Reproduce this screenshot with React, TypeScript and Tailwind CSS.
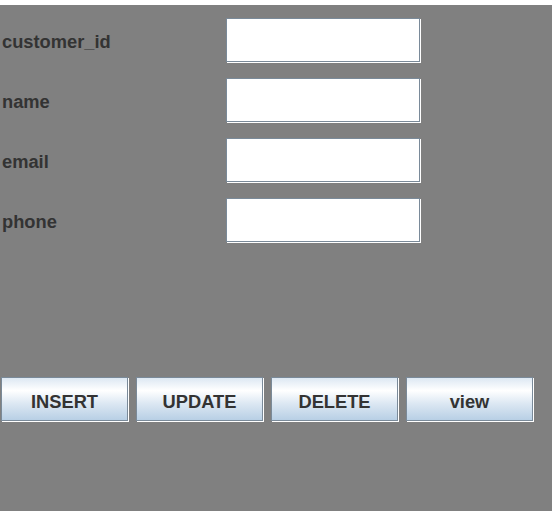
import React from "react";

const fields = ["customer_id", "name", "email", "phone"];
const buttons = ["INSERT", "UPDATE", "DELETE", "view"];

export default function App() {
  return (
    <div
      className="w-[552px] h-[511px] bg-white flex flex-col"
      style={{ fontFamily: '"Liberation Sans", Arial, sans-serif' }}
    >
      <div className="h-[5px] bg-white" />
      <div className="flex-1 bg-[#808080] flex flex-col">
        <div className="flex flex-col gap-[16px] pt-[13px] pl-[2px]">
          {fields.map((f) => (
            <div key={f} className="flex items-center h-[44px]">
              <div className="w-[224px] text-[18.3px] font-bold text-[#333333] leading-none pt-[5px]">
                {f}
              </div>
              <div className="w-[194px] h-[44px] bg-white border border-[#7a8a99] shadow-[1px_1px_0_#ffffff]" />
            </div>
          ))}
        </div>
        <div className="flex gap-[8px] pl-[1px] mt-[135px]">
          {buttons.map((b) => (
            <div
              key={b}
              className="w-[127px] h-[44px] pt-[7px] border border-[#7a8a99] shadow-[1px_1px_0_#ffffff] flex items-center justify-center text-[18.3px] font-bold text-[#333333] leading-none bg-[linear-gradient(to_bottom,#dde8f3_0%,#ffffff_30%,#dde8f3_60%,#b8cfe5_100%)]"
            >
              {b}
            </div>
          ))}
        </div>
      </div>
    </div>
  );
}
